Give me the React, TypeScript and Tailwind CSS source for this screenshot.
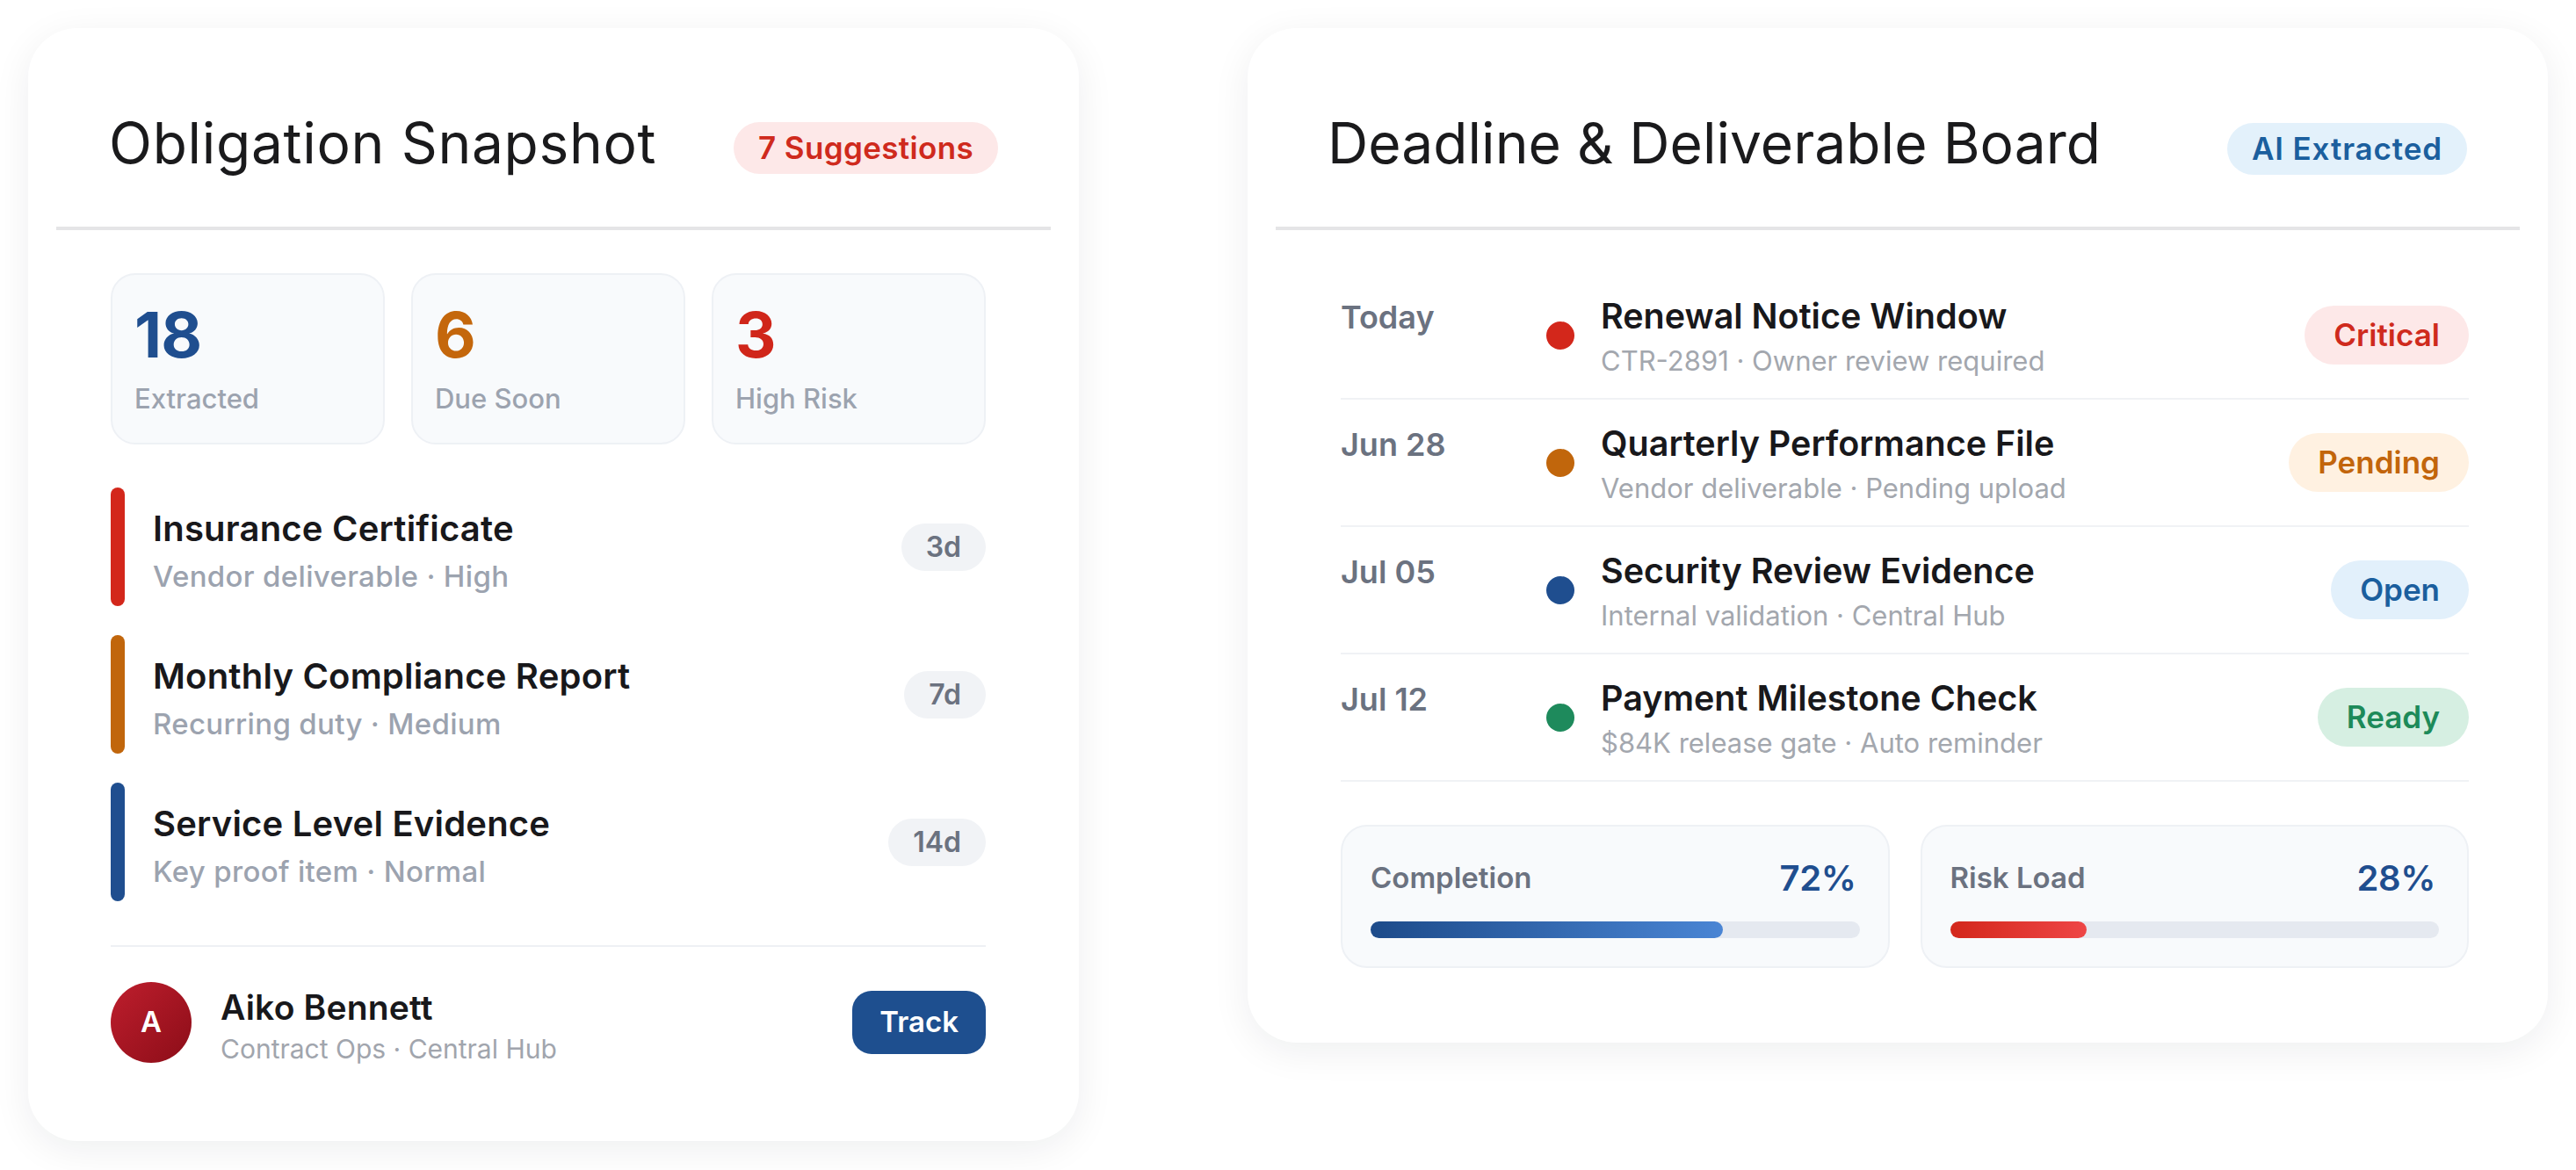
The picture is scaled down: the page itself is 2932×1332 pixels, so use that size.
import React from "react";

type Obligation = { title: string; meta: string; due: string; bar: string };
type Deadline = {
  date: string;
  title: string;
  meta: string;
  dot: string;
  status: string;
  pill: string;
};

const obligations: Obligation[] = [
  { title: "Insurance Certificate", meta: "Vendor deliverable · High", due: "3d", bar: "bg-[#d3271b]" },
  { title: "Monthly Compliance Report", meta: "Recurring duty · Medium", due: "7d", bar: "bg-[#c1660c]" },
  { title: "Service Level Evidence", meta: "Key proof item · Normal", due: "14d", bar: "bg-[#1f4e8f]" },
];

const deadlines: Deadline[] = [
  {
    date: "Today",
    title: "Renewal Notice Window",
    meta: "CTR-2891 · Owner review required",
    dot: "bg-[#d3271b]",
    status: "Critical",
    pill: "bg-[#fde8e8] text-[#cf2a1d]",
  },
  {
    date: "Jun 28",
    title: "Quarterly Performance File",
    meta: "Vendor deliverable · Pending upload",
    dot: "bg-[#c1660c]",
    status: "Pending",
    pill: "bg-[#fff1e1] text-[#c2650b]",
  },
  {
    date: "Jul 05",
    title: "Security Review Evidence",
    meta: "Internal validation · Central Hub",
    dot: "bg-[#1f4e8f]",
    status: "Open",
    pill: "bg-[#e2f0fb] text-[#1b5f9e]",
  },
  {
    date: "Jul 12",
    title: "Payment Milestone Check",
    meta: "$84K release gate · Auto reminder",
    dot: "bg-[#1e8a5c]",
    status: "Ready",
    pill: "bg-[#d6efe2] text-[#1d8a59]",
  },
];

function Stat({ value, label, color }: { value: string; label: string; color: string }) {
  return (
    <div className="h-[195px] rounded-[28px] border-2 border-[#eef1f5] bg-[#f8fafc] px-[25px] pt-[32px]">
      <div className={`text-[72px] font-bold leading-[72px] tracking-[-0.01em] ${color}`}>{value}</div>
      <div className="mt-[19px] text-[31px] font-medium leading-[36px] text-[#9ca3af]">{label}</div>
    </div>
  );
}

function ObligationSnapshot() {
  return (
    <div className="w-[1196px] shrink-0 rounded-[56px] bg-white p-[32px] pb-[89px] shadow-[0_10px_44px_rgba(15,23,42,0.07)]">
      <div className="flex h-[194px] items-start justify-between pl-[60px] pr-[60px] pt-[59px]">
        <h2 className="text-[64px] font-normal leading-[80px] tracking-[0.011em] text-[#1a1a1c]">
          Obligation Snapshot
        </h2>
        <span className="mt-[16px] flex h-[59px] items-center rounded-full bg-[#fde8e8] px-[28px] text-[35px] font-semibold tracking-[0.01em] text-[#cf2a1d]">
          7 Suggestions
        </span>
      </div>
      <div className="h-[4px] bg-[#e5e5e7]" />

      <div className="ml-[62px] w-[996px]">
        <div className="mt-[49px] grid grid-cols-3 gap-[30px]">
          <Stat value="18" label="Extracted" color="text-[#1f4e8f]" />
          <Stat value="6" label="Due Soon" color="text-[#c4670c]" />
          <Stat value="3" label="High Risk" color="text-[#d0261a]" />
        </div>

        <div className="mt-[49px] flex flex-col gap-[33px]">
          {obligations.map((o) => (
            <div key={o.title} className="flex h-[135px] items-center">
              <div className={`h-full w-[16px] rounded-full ${o.bar}`} />
              <div className="ml-[32px] flex-1 pt-[10px]">
                <div className="text-[40px] font-semibold leading-[46px] tracking-[0.005em] text-[#18181b]">
                  {o.title}
                </div>
                <div className="mt-[11px] text-[33px] font-medium leading-[40px] tracking-[0.01em] text-[#9ca3af]">
                  {o.meta}
                </div>
              </div>
              <span className="flex h-[54px] items-center rounded-full bg-[#f1f3f6] px-[28px] text-[32px] font-semibold text-[#6b7280]">
                {o.due}
              </span>
            </div>
          ))}
        </div>

        <div className="mt-[50px] h-[2px] bg-[#eef0f4]" />

        <div className="mt-[40px] flex h-[92px] items-center">
          <div className="flex h-[92px] w-[92px] items-center justify-center rounded-full bg-[linear-gradient(135deg,#be1e2d,#8c0d18)] text-[33px] font-semibold text-white">
            A
          </div>
          <div className="ml-[33px] flex-1 pt-[10px]">
            <div className="text-[39px] font-semibold leading-[44px] tracking-[0.005em] text-[#18181b]">
              Aiko Bennett
            </div>
            <div className="mt-[5px] text-[30px] font-normal leading-[40px] text-[#a1a5ad]">
              Contract Ops · Central Hub
            </div>
          </div>
          <button className="flex h-[72px] items-center rounded-[22px] bg-[#1e4f8f] px-[31px] text-[33px] font-semibold text-white">
            Track
          </button>
        </div>
      </div>
    </div>
  );
}

function Meter({ label, value, pct, fill }: { label: string; value: string; pct: number; fill: string }) {
  return (
    <div className="h-[163px] rounded-[30px] border-2 border-[#eef1f5] bg-[#f8fafc] px-[32px] pt-[35px]">
      <div className="flex h-[48px] items-center justify-between">
        <span className="text-[33px] font-semibold text-[#6b7280]">{label}</span>
        <span className="mr-[4px] text-[40px] font-semibold tracking-[-0.01em] text-[#1f4e8f]">{value}</span>
      </div>
      <div className="mt-[25px] h-[19px] rounded-full bg-[#e5e9f0]">
        <div className={`h-full rounded-full ${fill}`} style={{ width: `${pct}%` }} />
      </div>
    </div>
  );
}

function DeadlineBoard() {
  return (
    <div className="w-[1480px] shrink-0 rounded-[56px] bg-white p-[32px] pb-[85px] shadow-[0_10px_44px_rgba(15,23,42,0.07)]">
      <div className="flex h-[194px] items-start justify-between pl-[59px] pr-[60px] pt-[59px]">
        <h2 className="text-[64px] font-normal leading-[80px] tracking-[0.001em] text-[#1a1a1c]">
          Deadline &amp; Deliverable Board
        </h2>
        <span className="mt-[17px] flex h-[59px] items-center rounded-full bg-[#e3f1fb] px-[28px] text-[35px] font-semibold tracking-[0.025em] text-[#1b5f9e]">
          AI Extracted
        </span>
      </div>
      <div className="h-[4px] bg-[#e5e5e7]" />

      <div className="ml-[74px] w-[1284px]">
        <div className="mt-[48px]">
          {deadlines.map((d) => (
            <div key={d.title} className="flex h-[145px] border-b-2 border-[#f0f2f5]">
              <div className="w-[234px] pt-[29px] text-[36px] font-semibold leading-[44px] text-[#6b7280]">
                {d.date}
              </div>
              <div className="flex flex-1 items-center">
                <span className={`h-[32px] w-[32px] rounded-full ${d.dot}`} />
                <div className="ml-[30px] flex-1 pt-[4px]">
                  <div className="text-[39.5px] font-semibold leading-[46px] text-[#18181b]">{d.title}</div>
                  <div className="mt-[8px] text-[31px] font-normal leading-[40px] text-[#a3a7ae]">{d.meta}</div>
                </div>
                <span
                  className={`flex h-[67px] items-center rounded-full px-[33px] text-[35px] font-semibold ${d.pill}`}
                >
                  {d.status}
                </span>
              </div>
            </div>
          ))}
        </div>

        <div className="mt-[49px] grid grid-cols-2 gap-[35px]">
          <Meter
            label="Completion"
            value="72%"
            pct={72}
            fill="bg-[linear-gradient(90deg,#1d4b8a,#4a85d4)]"
          />
          <Meter
            label="Risk Load"
            value="28%"
            pct={28}
            fill="bg-[linear-gradient(90deg,#d3271b,#ee4646)]"
          />
        </div>
      </div>
    </div>
  );
}

export default function App() {
  return (
    <div className="flex min-h-[1332px] w-[2932px] items-start gap-[192px] bg-white p-[32px] font-['Inter',sans-serif] antialiased">
      <ObligationSnapshot />
      <DeadlineBoard />
    </div>
  );
}
